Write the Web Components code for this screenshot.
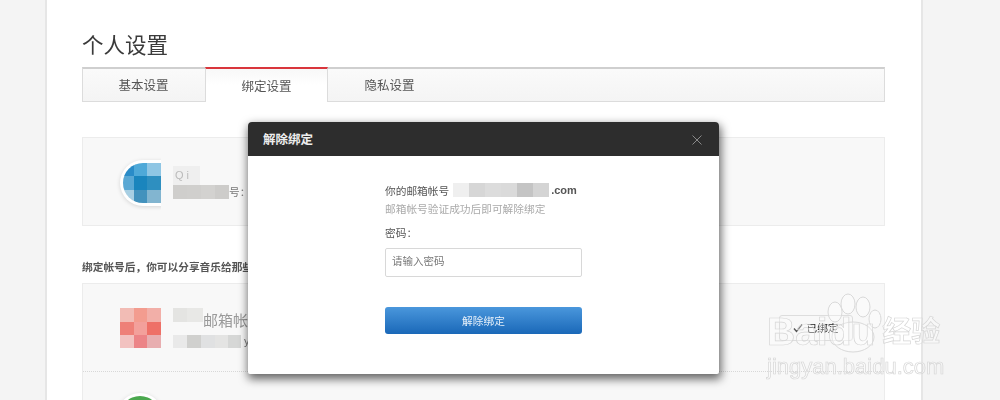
<!DOCTYPE html>
<html lang="zh">
<head>
<meta charset="utf-8">
<title>个人设置</title>
<style>
  html, body { margin: 0; height: 400px; overflow: hidden; background: #f4f4f4; }
  body { font-family: "Liberation Sans", "Noto Sans CJK SC", sans-serif; }
</style>
</head>
<body>
<settings-page>
  <settings-tabs>
    <tab-item>基本设置</tab-item>
    <tab-item active>绑定设置</tab-item>
    <tab-item>隐私设置</tab-item>
  </settings-tabs>
  <bind-card style="height:87px;margin-top:35px">
    <bind-row style="padding-top:2px">
      <pixel-block slot="avatar" round style="margin-left:3px" cols="11px 13px 14px" rows="13px 14px 13px" cells="#2a8cc8,#4fa9d8,#8fc6e4,#5aa8d4,#1a85bd,#2e8fc0,#a8cfe3,#4392bd,#82b5d0"></pixel-block>
      <div slot="info" style="color:#bbb;font-size:11px;line-height:19px;height:19px;width:27px;background:#efefef;overflow:hidden;padding-left:2px;box-sizing:border-box">Q i</div>
      <div slot="info" style="display:flex;align-items:center;font-size:10.7px;color:#777;line-height:14px">
        <pixel-block cols="14px 14px 14px 14px" rows="14px" cells="#cfcecc,#d0cfcd,#d3d2d0,#cdccca"></pixel-block>
        <span>号：1</span>
      </div>
    </bind-row>
  </bind-card>
  <p class="hint">绑定帐号后，你可以分享音乐给那些好友</p>
  <bind-card>
    <bind-row dashed style="height:88px">
      <pixel-block slot="avatar" cols="14px 13px 14px" rows="14px 13px 13px" cells="#f2bcb5,#f39c8f,#f2afa8,#ee8078,#f3a09b,#ee7067,#f2c2c0,#ec8487,#e8aeb0"></pixel-block>
      <div slot="info" style="display:flex;align-items:flex-start;height:27px;font-size:15px;line-height:26px;color:#999">
        <pixel-block cols="14px 16px" rows="14px" cells="#e4e4e2,#e8e8e6"></pixel-block>
        <span>邮箱帐号</span>
      </div>
      <div slot="info" style="display:flex;align-items:center;font-size:11px;color:#777;line-height:13px">
        <pixel-block cols="14px 14px 14px 13px 13px" rows="13px" cells="#e9e9e9,#d0d0ce,#e0e1e2,#e4e4e3,#d6d7d6"></pixel-block>
        <span style="margin-left:3px">y</span>
      </div>
      <bound-tag slot="action">已绑定</bound-tag>
    </bind-row>
    <bind-row>
      <pixel-block slot="avatar" ring cols="40px" rows="40px" cells="#4aa84e"></pixel-block>
    </bind-row>
  </bind-card>
</settings-page>

<unbind-dialog heading="解除绑定"></unbind-dialog>

<baidu-mark></baidu-mark>

<script>
class SettingsPage extends HTMLElement {
  constructor() {
    super();
    this.attachShadow({ mode: 'open' }).innerHTML = `
      <style>
        :host {
          display: block;
          box-sizing: border-box;
          width: 878px;
          height: 400px;
          margin-left: 45px;
          padding: 32px 36px 0 35px;
          background: #fff;
          border-left: 2px solid #e6e6e6;
          border-right: 2px solid #e6e6e6;
          overflow: hidden;
          filter: blur(.4px);
          color: #333;
        }
        h1 {
          margin: 0 0 7px;
          font-size: 21.5px;
          line-height: 28px;
          font-weight: 400;
          color: #3a3a3a;
        }
        ::slotted(.hint) {
          margin: 34px 0 9px;
          font-size: 10.7px;
          line-height: 14px;
          font-weight: 700;
          color: #555;
        }
      </style>
      <h1>个人设置</h1>
      <slot></slot>`;
  }
}

class SettingsTabs extends HTMLElement {
  constructor() {
    super();
    this.attachShadow({ mode: 'open' }).innerHTML = `
      <style>
        :host {
          display: flex;
          box-sizing: border-box;
          height: 35px;
          border: 1px solid #dcdcdc;
          border-top: 2px solid #cfcfcf;
          background: linear-gradient(#fafafa, #f4f4f4);
        }
      </style>
      <slot></slot>`;
  }
}

class TabItem extends HTMLElement {
  constructor() {
    super();
    this.attachShadow({ mode: 'open' }).innerHTML = `
      <style>
        :host {
          display: flex;
          align-items: center;
          justify-content: center;
          box-sizing: border-box;
          width: 123px;
          padding-bottom: 2px;
          font-size: 12.5px;
          color: #555;
        }
        :host(:first-child) { margin-left: -1px; }
        :host([active]) {
          height: 35px;
          margin-top: -2px;
          padding-bottom: 0;
          border-top: 2px solid #d9363c;
          border-left: 1px solid #dcdcdc;
          border-right: 1px solid #dcdcdc;
          background: linear-gradient(#f8f8f8, #fff 50%);
        }
      </style>
      <slot></slot>`;
  }
}

class BindCard extends HTMLElement {
  constructor() {
    super();
    this.attachShadow({ mode: 'open' }).innerHTML = `
      <style>
        :host {
          display: block;
          background: #f8f8f8;
          border: 1px solid #ececec;
        }
      </style>
      <slot></slot>`;
  }
}

class BindRow extends HTMLElement {
  constructor() {
    super();
    this.attachShadow({ mode: 'open' }).innerHTML = `
      <style>
        :host {
          display: flex;
          align-items: center;
          box-sizing: border-box;
          height: 87px;
          padding: 0 31px 0 37px;
        }
        :host([dashed]) { border-bottom: 1px dotted #d8d8d8; }
        .avatar { width: 53px; flex: none; }
        .info { flex: 1; }
        ::slotted([slot="info"]) { white-space: nowrap; }
      </style>
      <div class="avatar"><slot name="avatar"></slot></div>
      <div class="info"><slot name="info"></slot></div>
      <slot name="action"></slot>`;
  }
}

class PixelBlock extends HTMLElement {
  constructor() {
    super();
    this.attachShadow({ mode: 'open' });
  }

  connectedCallback() {
    const cells = this.getAttribute('cells').split(',');
    this.shadowRoot.innerHTML = `
      <style>
        :host {
          display: grid;
          flex: none;
          width: max-content;
          grid-template-columns: ${this.getAttribute('cols')};
          grid-template-rows: ${this.getAttribute('rows')};
        }
        :host([round]) {
          overflow: hidden;
          border-radius: 20px 0 0 20px;
          box-shadow: 0 0 0 3px #fff, 0 1px 4px 3px rgba(0,0,0,.14);
          clip-path: inset(-8px 0 -8px -8px);
        }
        :host([ring]) {
          overflow: hidden;
          border-radius: 50%;
          box-shadow: 0 0 0 3px #fff, 0 1px 4px 3px rgba(0,0,0,.14);
        }
      </style>
      ${cells.map(c => `<i style="background:${c}"></i>`).join('')}`;
  }
}

class BoundTag extends HTMLElement {
  constructor() {
    super();
    this.attachShadow({ mode: 'open' }).innerHTML = `
      <style>
        :host {
          display: flex;
          align-items: center;
          justify-content: center;
          gap: 3px;
          box-sizing: border-box;
          width: 74px;
          height: 26px;
          border: 1px solid #ddd;
          border-radius: 3px;
          font-size: 10.7px;
          color: #222;
        }
        svg { width: 10px; height: 10px; }
      </style>
      <svg viewBox="0 0 10 10"><path d="M1 5.5l2.5 3L9 1.5" fill="none" stroke="#555" stroke-width="1.4"/></svg>
      <slot></slot>`;
  }
}

class UnbindDialog extends HTMLElement {
  constructor() {
    super();
    this.attachShadow({ mode: 'open' }).innerHTML = `
      <style>
        :host {
          position: absolute;
          left: 248px;
          top: 122px;
          width: 471px;
          height: 252px;
          background: #fff;
          border-radius: 4px 4px 2px 2px;
          box-shadow: 1px 4px 10px 1px rgba(0,0,0,.6);
          filter: blur(.35px);
          font-size: 10.7px;
          color: #555;
        }
        header {
          display: flex;
          align-items: center;
          justify-content: space-between;
          box-sizing: border-box;
          height: 34px;
          padding: 0 15px 2px;
          background: #2d2d2d;
          border-radius: 4px 4px 0 0;
          font-size: 12.5px;
          font-weight: 700;
          color: #eee;
        }
        header svg { width: 12px; height: 12px; margin: 3px 1px 0 0; }
        .form {
          display: flex;
          flex-direction: column;
          width: 197px;
          margin-left: 137px;
          padding-top: 27px;
        }
        .email { display: flex; align-items: center; height: 14px; white-space: nowrap; }
        .email b { font-size: 11px; color: #555; }
        .mask {
          display: grid;
          grid-template-columns: repeat(6, 16px);
          width: 96px;
          height: 14px;
          margin: 0 2px 0 4px;
        }
        .tip { margin-top: 5px; line-height: 14px; color: #aaa; }
        label { margin-top: 10px; line-height: 14px; }
        .input {
          box-sizing: border-box;
          height: 29px;
          margin-top: 8px;
          padding-left: 6px;
          line-height: 25px;
          border: 1px solid #d8d8d8;
          border-radius: 2px;
          font-size: 10.5px;
          color: #777;
        }
        .btn {
          display: flex;
          align-items: center;
          justify-content: center;
          height: 27px;
          margin-top: 30px;
          border-radius: 3px;
          background: linear-gradient(#4a97dc, #1a68b8);
          color: #e8f1fa;
        }
      </style>
      <header>
        <span>${this.getAttribute('heading')}</span>
        <svg viewBox="0 0 12 12"><path d="M1.5 1.5l9 9M10.5 1.5l-9 9" stroke="#8a8a8a" stroke-width="1"/></svg>
      </header>
      <div class="form">
        <div class="email">
          <span>你的邮箱帐号</span>
          <span class="mask">
            <i style="background:#efefef"></i><i style="background:#d6d6d6"></i><i style="background:#dcdcdc"></i><i style="background:#dadada"></i><i style="background:#c4c4c4"></i><i style="background:#d4d4d4"></i>
          </span>
          <b>.com</b>
        </div>
        <div class="tip">邮箱帐号验证成功后即可解除绑定</div>
        <label>密码：</label>
        <div class="input">请输入密码</div>
        <div class="btn">解除绑定</div>
      </div>`;
  }
}

class BaiduMark extends HTMLElement {
  constructor() {
    super();
    this.attachShadow({ mode: 'open' }).innerHTML = `
      <style>
        :host {
          position: absolute;
          left: 766px;
          top: 292px;
          width: 182px;
          height: 90px;
          color: rgba(255,255,255,.3);
          -webkit-text-stroke: .7px #d6d6d6;
          filter: blur(.3px);
        }
        svg { position: absolute; left: 0; top: 0; width: 182px; height: 70px; }
        .logo {
          position: absolute;
          left: 1px;
          top: 18px;
          display: flex;
          align-items: center;
          gap: 7px;
          line-height: 44px;
          white-space: nowrap;
        }
        .bai { font-size: 39px; font-weight: 700; }
        .jy { font-size: 29px; font-weight: 700; }
        .url {
          position: absolute;
          left: 1px;
          top: 62px;
          font-size: 22px;
          line-height: 26px;
          white-space: nowrap;
        }
      </style>
      <svg viewBox="0 0 182 70" fill="rgba(255,255,255,.3)" stroke="#d8d8d8">
        <ellipse cx="69" cy="20" rx="7" ry="10"/>
        <ellipse cx="82" cy="12" rx="7" ry="10"/>
        <ellipse cx="97" cy="15" rx="7" ry="10"/>
        <ellipse cx="109" cy="27" rx="6" ry="9"/>
        <ellipse cx="87" cy="45" rx="21" ry="15"/>
      </svg>
      <div class="logo"><span class="bai">Baidu</span><span class="jy">经验</span></div>
      <div class="url">jingyan.baidu.com</div>`;
  }
}

customElements.define('settings-page', SettingsPage);
customElements.define('settings-tabs', SettingsTabs);
customElements.define('tab-item', TabItem);
customElements.define('bind-card', BindCard);
customElements.define('bind-row', BindRow);
customElements.define('pixel-block', PixelBlock);
customElements.define('bound-tag', BoundTag);
customElements.define('unbind-dialog', UnbindDialog);
customElements.define('baidu-mark', BaiduMark);
</script>
</body>
</html>
